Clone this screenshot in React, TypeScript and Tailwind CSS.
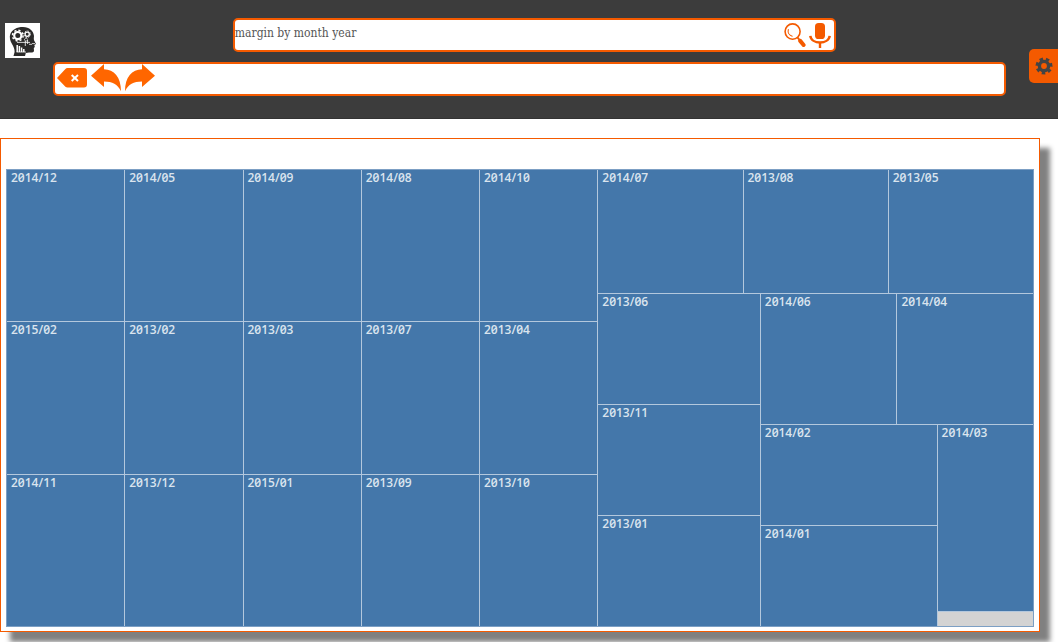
import { useState } from "react";

function HeadLogo() {
  return (
    <svg viewBox="0 0 35 35" className="block w-full" aria-hidden="true">
      <rect width="35" height="35" fill="#fff" />
      <path
        d="M8.5 33 L9.6 29 C9.8 26 8.6 24 7 21 C5 17.5 4.3 14 5.2 11.5 C6.8 6.5 12 4 18 4 C24.5 4 28.6 8 29 13 C28.8 15.5 28.6 16.4 29.4 18 L31 21 L29.4 22 L29.8 24 L28.8 25 L29 28 C28.6 29.6 26.5 29.7 24 29.4 L20.8 30 L20 33 Z"
        fill="#2b2a29"
      />
      <circle cx="12.8" cy="12.6" r="3.6" fill="none" stroke="#fff" strokeWidth="2.2" />
      <circle cx="12.8" cy="12.6" r="5.3" fill="none" stroke="#fff" strokeWidth="1.5" strokeDasharray="2.1 2.06" />
      <circle cx="22.2" cy="11.2" r="2.1" fill="none" stroke="#fff" strokeWidth="1.3" />
      <circle cx="22.2" cy="11.2" r="3.2" fill="none" stroke="#fff" strokeWidth="1" strokeDasharray="1.3 1.2" />
      <circle cx="21" cy="16.6" r="1.5" fill="none" stroke="#fff" strokeWidth="1" strokeDasharray="1.2 .5" />
      <path d="M12 19.4H25M27 20.6H30M20.3 18V23M22.6 17V21M24 21.3H27" stroke="#fff" strokeWidth=".8" fill="none" />
      <path d="M12.2 22V29M14.4 23V29M16.6 24.4V29M18.8 26V29" stroke="#fff" strokeWidth="1.5" />
      <path d="M11.5 29H21" stroke="#fff" strokeWidth=".8" />
    </svg>
  );
}

function SearchIcon() {
  return (
    <svg viewBox="0 0 22 25" className="block h-[25px] w-[22px]" aria-hidden="true">
      <ellipse cx="8.6" cy="8.6" rx="7.5" ry="7.7" fill="none" stroke="#f45a00" strokeWidth="1.6" />
      <path d="M4.3 6.6C3.6 9.3 5 12.3 8.2 13.2" fill="none" stroke="#f45a00" strokeWidth="1.1" strokeLinecap="round" />
      <path d="M13.4 14.4L16 17.4" stroke="#f45a00" strokeWidth="1.8" />
      <path d="M16.2 17.9L19.6 22" stroke="#f45a00" strokeWidth="4" strokeLinecap="round" />
    </svg>
  );
}

function MicIcon() {
  return (
    <svg viewBox="0 0 22 25" className="block h-[25px] w-[22px]" aria-hidden="true">
      <rect x="6" y="0" width="10" height="16" rx="3.6" fill="#f45a00" />
      <path d="M1.3 12.8C2.4 21.6 19.6 21.6 20.7 12.8" fill="none" stroke="#f45a00" strokeWidth="2.5" />
      <path d="M11 19V25" stroke="#f45a00" strokeWidth="2.4" />
    </svg>
  );
}

function ClearIcon() {
  return (
    <svg viewBox="0 0 30 28" className="block h-7 w-[30px]" aria-hidden="true">
      <path d="M0 14L8.4 4.9Q9.2 4 10.5 4H27Q30 4 30 7V20.6Q30 23.6 27 23.6H10.5Q9.2 23.6 8.4 22.8Z" fill="#ff6600" />
      <path d="M14.7 11L21 17M21 11L14.7 17" stroke="#fff" strokeWidth="2" />
    </svg>
  );
}

function UndoIcon() {
  return (
    <svg viewBox="0 0 30 28" className="block h-7 w-[30px]" aria-hidden="true">
      <path d="M0 11.8L13 0V5.3C23 5.4 30 13 30 27.2C26.5 20.2 21.5 17.6 13 17.6V23Z" fill="#ff6600" />
    </svg>
  );
}

function RedoIcon() {
  return (
    <svg viewBox="0 0 30 28" className="block h-7 w-[30px]" aria-hidden="true">
      <path d="M30 11.8L17 0V5.3C7 5.4 0 13 0 27.2C3.5 20.2 8.5 17.6 17 17.6V23Z" fill="#ff6600" />
    </svg>
  );
}

function GearIcon() {
  return (
    <svg viewBox="0 0 18 18" className="block size-[18px]" aria-hidden="true">
      <circle cx="9" cy="9" r="4.6" fill="none" stroke="#444" strokeWidth="3.4" />
      <g fill="#444">
        <path d="M7 0.6H11L10.4 4H7.6Z" transform="rotate(-22 9 9)" />
        <path d="M7 0.6H11L10.4 4H7.6Z" transform="rotate(29 9 9)" />
        <path d="M7 0.6H11L10.4 4H7.6Z" transform="rotate(81 9 9)" />
        <path d="M7 0.6H11L10.4 4H7.6Z" transform="rotate(132 9 9)" />
        <path d="M7 0.6H11L10.4 4H7.6Z" transform="rotate(184 9 9)" />
        <path d="M7 0.6H11L10.4 4H7.6Z" transform="rotate(235 9 9)" />
        <path d="M7 0.6H11L10.4 4H7.6Z" transform="rotate(287 9 9)" />
      </g>
    </svg>
  );
}

function Tile({ label }: { label: string }) {
  return (
    <div className="min-h-0 min-w-0 overflow-hidden bg-[#4477aa] pl-1 text-[12px] leading-4 font-semibold text-[#dae4ee]">
      {label}
    </div>
  );
}

const months = [
  "2014/12", "2014/05", "2014/09", "2014/08", "2014/10",
  "2015/02", "2013/02", "2013/03", "2013/07", "2013/04",
  "2014/11", "2013/12", "2015/01", "2013/09", "2013/10",
];

function Treemap() {
  return (
    <div className="grid h-[458px] grid-cols-[592fr_436fr] gap-px border border-[#7c9fc4] bg-[#b4c8dd] font-['Open_Sans',sans-serif] slashed-zero">
      <div className="grid grid-cols-5 grid-rows-3 gap-px">
        {months.map((m) => (
          <Tile key={m} label={m} />
        ))}
      </div>
      <div className="grid grid-rows-[123fr_333fr] gap-px">
        <div className="grid grid-cols-3 gap-px">
          <Tile label="2014/07" />
          <Tile label="2013/08" />
          <Tile label="2013/05" />
        </div>
        <div className="grid grid-cols-[162fr_273fr] gap-px">
          <div className="grid grid-rows-3 gap-px">
            <Tile label="2013/06" />
            <Tile label="2013/11" />
            <Tile label="2013/01" />
          </div>
          <div className="grid grid-rows-[131fr_202fr] gap-px">
            <div className="grid grid-cols-2 gap-px">
              <Tile label="2014/06" />
              <Tile label="2014/04" />
            </div>
            <div className="grid grid-cols-[177fr_96fr] gap-px">
              <div className="grid grid-rows-2 gap-px">
                <Tile label="2014/02" />
                <Tile label="2014/01" />
              </div>
              <div className="grid grid-rows-[187fr_14fr] gap-px">
                <Tile label="2014/03" />
                <div className="bg-[#d3d3d3]" />
              </div>
            </div>
          </div>
        </div>
      </div>
    </div>
  );
}

export default function App() {
  const [query, setQuery] = useState("margin by month year");

  return (
    <div className="bg-white pb-2.5">
      <header className="relative flex h-[119px] border-b border-[#333] bg-[#3c3c3c]">
        <div className="w-[5%] shrink-0 pt-[23px] pl-[5px]">
          <a href="#home" aria-label="Home" className="block w-[35px]">
            <HeadLogo />
          </a>
        </div>
        <div className="flex min-w-0 flex-1 flex-col gap-2.5 pt-[18px]">
          <form
            onSubmit={(e) => e.preventDefault()}
            className="ml-[17.9%] flex h-[34px] w-[60%] items-center rounded-[5px] border-2 border-[#f45a00] bg-white"
          >
            <input
              type="text"
              aria-label="Search query"
              value={query}
              onChange={(e) => setQuery(e.target.value)}
              className="h-full min-w-0 flex-1 pb-1 font-['DejaVu_Serif_Condensed','DejaVu_Serif',serif] text-[12px] text-[#555] outline-none"
            />
            <div className="flex items-center gap-[3px] pr-[3px]">
              <button type="submit" aria-label="Search">
                <SearchIcon />
              </button>
              <button type="button" aria-label="Voice search">
                <MicIcon />
              </button>
            </div>
          </form>
          <div className="flex h-[34px] w-[94.8%] items-start gap-1 rounded-[5px] border-2 border-[#f45a00] bg-white pl-0.5">
            <button type="button" aria-label="Clear">
              <ClearIcon />
            </button>
            <button type="button" aria-label="Undo">
              <UndoIcon />
            </button>
            <button type="button" aria-label="Redo">
              <RedoIcon />
            </button>
          </div>
        </div>
        <button
          type="button"
          aria-label="Settings"
          className="absolute top-[49px] right-0 flex h-[34px] w-[29px] items-center rounded-l-[5px] bg-[#f45a00] pl-1.5"
        >
          <GearIcon />
        </button>
      </header>
      <main className="pt-[19px] pr-[18px]">
        <section
          aria-label="Margin by month and year"
          className="border border-[#f45a00] bg-white px-[5px] pt-[30px] pb-1 shadow-[10px_10px_5px_#808080]"
        >
          <Treemap />
        </section>
      </main>
    </div>
  );
}
